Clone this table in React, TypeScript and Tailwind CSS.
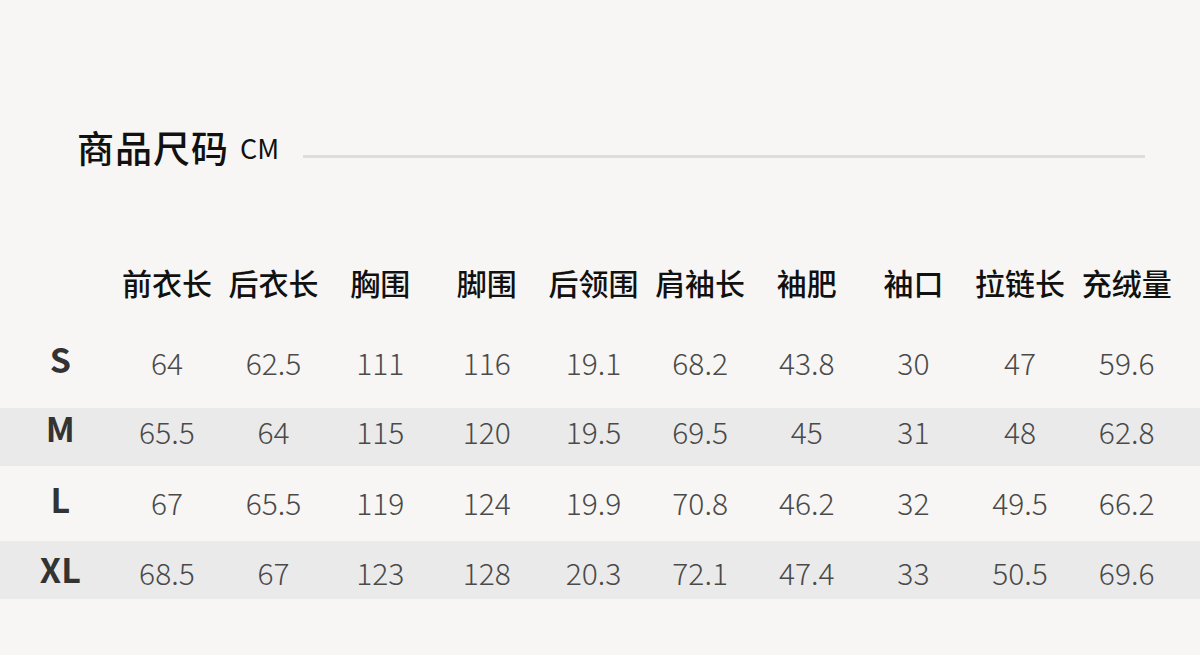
import React from "react";

const headers = ["前衣长", "后衣长", "胸围", "脚围", "后领围", "肩袖长", "袖肥", "袖口", "拉链长", "充绒量"];

const rows: { size: string; values: string[]; rowCls: string }[] = [
  {
    size: "S",
    values: ["64", "62.5", "111", "116", "19.1", "68.2", "43.8", "30", "47", "59.6"],
    rowCls: "h-[70px] pb-[23px]",
  },
  {
    size: "M",
    values: ["65.5", "64", "115", "120", "19.5", "69.5", "45", "31", "48", "62.8"],
    rowCls: "h-[58px] pb-[13px] bg-[#eaeaea]",
  },
  {
    size: "L",
    values: ["67", "65.5", "119", "124", "19.9", "70.8", "46.2", "32", "49.5", "66.2"],
    rowCls: "h-[75px] pb-[4px]",
  },
  {
    size: "XL",
    values: ["68.5", "67", "123", "128", "20.3", "72.1", "47.4", "33", "50.5", "69.6"],
    rowCls: "h-[58px] pt-[3px] bg-[#eaeaea]",
  },
];

const cjk = "font-['Noto_Sans_CJK_SC','Noto_Sans',sans-serif]";

export default function App() {
  return (
    <div className={`w-[1200px] h-[655px] bg-[#f7f6f4] overflow-hidden ${cjk}`}>
      {/* Title */}
      <div className="pt-[125px] pl-[77px] flex items-center h-[169px] box-border">
        <span className="text-[37px] leading-[44px] font-medium text-[#111] tracking-[1px]">商品尺码</span>
        <span className="ml-[11px] text-[27px] leading-[44px] text-[#111] pt-[2px]">CM</span>
        <div className="ml-[24px] mt-[18px] w-[842px] h-[3px] bg-[#dedddb]" />
      </div>

      {/* Header row */}
      <div className="mt-[91px] pl-[7px] h-[44px]">
        <div className="grid grid-cols-11 w-[1173px] h-full items-center">
          <div />
          {headers.map((h) => (
            <div key={h} className="text-center text-[30px] leading-[44px] font-medium text-[#111]">
              {h}
            </div>
          ))}
        </div>
      </div>

      {/* Data rows */}
      <div className="mt-[34px] flex flex-col">
        {rows.map((r) => (
          <div key={r.size} className={`w-[1200px] pl-[7px] box-border flex items-center ${r.rowCls}`}>
            <div className="grid grid-cols-11 w-[1173px] items-center">
              <div className="text-center text-[34px] leading-[34px] font-bold text-[#333] mb-[5px]">{r.size}</div>
              {r.values.map((v, i) => (
                <div key={i} className="text-center text-[30px] leading-[30px] font-light text-[#4a4a4a]">
                  {v}
                </div>
              ))}
            </div>
          </div>
        ))}
      </div>
    </div>
  );
}
